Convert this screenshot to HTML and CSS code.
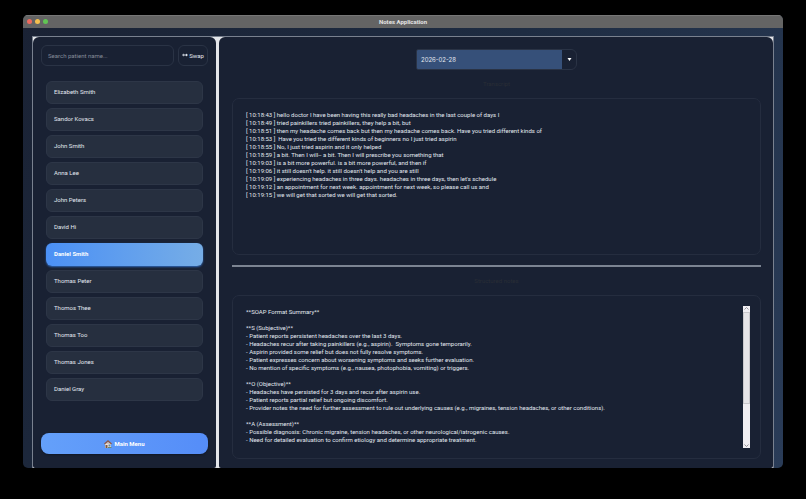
FILE: index.html
```html
<!DOCTYPE html>
<html lang="en">
<head>
    <meta charset="UTF-8">
    <meta name="viewport" content="width=device-width, initial-scale=1.0">
    <title>Notes Application</title>
    <link rel="stylesheet" href="styles.css">
</head>
<body>
    <div class="window">
        <header class="titlebar">
            <div class="lights">
                <span class="light close"></span>
                <span class="light minimize"></span>
                <span class="light zoom"></span>
            </div>
            <h1>Notes Application</h1>
        </header>

        <div class="splitter">
            <aside class="panel sidebar">
                <div class="search-row">
                    <input class="search" type="text" placeholder="Search patient name..." aria-label="Search patient name">
                    <button class="swap" type="button">
                        <svg width="6" height="4" viewBox="0 0 15 10" aria-hidden="true">
                            <path d="M5 1 L0 5 L5 9 Z M10 1 L15 5 L10 9 Z M4 4 H11 V6 H4 Z" fill="#e2e8f0"/>
                        </svg>
                        Swap
                    </button>
                </div>

                <div class="patients">
                    <button class="patient" type="button">Elizabeth Smith</button>
                    <button class="patient" type="button">Sandor Kovacs</button>
                    <button class="patient" type="button">John Smith</button>
                    <button class="patient" type="button">Anna Lee</button>
                    <button class="patient" type="button">John Peters</button>
                    <button class="patient" type="button">David Hi</button>
                    <button class="patient selected" type="button">Daniel Smith</button>
                    <button class="patient" type="button">Thomas Peter</button>
                    <button class="patient" type="button">Thomos Thee</button>
                    <button class="patient" type="button">Thomas Too</button>
                    <button class="patient" type="button">Thomas Jones</button>
                    <button class="patient" type="button">Daniel Gray</button>
                </div>

                <button class="main-menu" type="button">
                    <svg width="8" height="8" viewBox="0 0 16 16" aria-hidden="true">
                        <rect x="2" y="7" width="12" height="9" fill="#ece3d8"/>
                        <path d="M8 0 L16 7 L14 9 L8 4 L2 9 L0 7 Z" fill="#8d5a4c"/>
                        <path d="M8 4 L13 8 H3 Z" fill="#d8c4b4"/>
                        <rect x="3" y="10" width="4" height="6" fill="#7a5a48"/>
                        <rect x="9" y="9" width="4" height="4" fill="#5f88a8"/>
                        <rect x="8" y="14" width="7" height="2" fill="#6b8a6a"/>
                    </svg>
                    Main Menu
                </button>
            </aside>

            <main class="panel content">
                <div class="date-picker">
                    <select class="date" aria-label="Session date">
                        <option>2026-02-28</option>
                    </select>
                    <svg class="arrow" width="5" height="3" viewBox="0 0 10 6" aria-hidden="true">
                        <path d="M1 0 H9 L5 6 Z" fill="#ffffff"/>
                    </svg>
                </div>

                <section class="pane transcript">
                    <label for="transcript">Transcript</label>
                    <div class="box">
                        <textarea id="transcript" readonly>[ 10:18:43 ] hello doctor I have been having this really bad headaches in the last couple of days I
[ 10:18:49 ] tried painkillers tried painkillers, they help a bit, but
[ 10:18:51 ] then my headache comes back but then my headache comes back. Have you tried different kinds of
[ 10:18:53 ]  Have you tried the different kinds of beginners no I just tried aspirin
[ 10:18:55 ] No, I just tried aspirin and it only helped
[ 10:18:59 ] a bit. Then I will-- a bit. Then I will prescribe you something that
[ 10:19:03 ] is a bit more powerful. is a bit more powerful, and then if
[ 10:19:06 ] it still doesn't help. it still doesn't help and you are still
[ 10:19:09 ] experiencing headaches in three days. headaches in three days, then let's schedule
[ 10:19:12 ] an appointment for next week. appointment for next week, so please call us and
[ 10:19:15 ] we will get that sorted we will get that sorted.</textarea>
                    </div>
                </section>

                <section class="pane notes">
                    <label for="notes">Structured notes</label>
                    <div class="box">
                        <textarea id="notes" readonly>**SOAP Format Summary**

**S (Subjective)**
- Patient reports persistent headaches over the last 3 days.
- Headaches recur after taking painkillers (e.g., aspirin).  Symptoms gone temporarily.
- Aspirin provided some relief but does not fully resolve symptoms.
- Patient expresses concern about worsening symptoms and seeks further evaluation.
- No mention of specific symptoms (e.g., nausea, photophobia, vomiting) or triggers.

**O (Objective)**
- Headaches have persisted for 3 days and recur after aspirin use.
- Patient reports partial relief but ongoing discomfort.
- Provider notes the need for further assessment to rule out underlying causes (e.g., migraines, tension headaches, or other conditions).

**A (Assessment)**
- Possible diagnosis: Chronic migraine, tension headaches, or other neurological/iatrogenic causes.
- Need for detailed evaluation to confirm etiology and determine appropriate treatment.</textarea>
                        <div class="scrollbar">
                            <svg width="5" height="5" viewBox="0 0 10 10" aria-hidden="true">
                                <path d="M1 7 L5 3 L9 7" fill="none" stroke="#77777c" stroke-width="1.5"/>
                            </svg>
                            <div class="track"><div class="thumb"></div></div>
                            <svg width="5" height="5" viewBox="0 0 10 10" aria-hidden="true">
                                <path d="M1 3 L5 7 L9 3" fill="none" stroke="#77777c" stroke-width="1.5"/>
                            </svg>
                        </div>
                    </div>
                </section>
            </main>
        </div>
    </div>
</body>
</html>
```

FILE: styles.css
```css
* {
    box-sizing: border-box;
}
body {
    margin: 0;
    height: 100vh;
    padding: 15px 23px 31px;
    background-color: #000;
    font-family: Roboto, "Liberation Sans", sans-serif;
    font-size: 6px;
    color: #e2e8f0;
}
button, input, select, textarea {
    font: inherit;
    color: inherit;
    margin: 0;
}
.window {
    height: 100%;
    display: flex;
    flex-direction: column;
    border-radius: 5px;
    overflow: hidden;
    background: linear-gradient(120deg, #1a2234 0%, #1e2c42 50%, #2a3c58 100%);
}
.titlebar {
    display: grid;
    grid-template-columns: 1fr auto 1fr;
    align-items: center;
    height: 13px;
    padding: 0 4px 1px;
    background-color: #646464;
    border-top: 1px solid #777;
}
.titlebar h1 {
    margin: 0;
    font-size: 6px;
    font-weight: 700;
    color: #e4e4e4;
}
.lights {
    display: flex;
    gap: 3px;
}
.light {
    width: 5px;
    height: 5px;
    border-radius: 50%;
}
.close {
    background-color: #ed6a5e;
}
.minimize {
    background-color: #f4bf4f;
}
.zoom {
    background-color: #61c554;
}
.splitter {
    flex: 1;
    min-height: 0;
    display: grid;
    grid-template-columns: 183px 1fr;
    gap: 3px;
    margin: 8px 9px 0;
    border: 1px solid #79818f;
    border-bottom: none;
    background-color: #e4e6ea;
}
.panel {
    min-height: 0;
    display: flex;
    flex-direction: column;
    border-radius: 6px 6px 2px 2px;
    background-color: #192133;
}
.sidebar {
    padding: 8px 8px 14px;
}
.search-row {
    display: flex;
    gap: 4px;
    height: 21px;
}
.search, .swap {
    border: 1px solid #2a3345;
    border-radius: 6px;
    background-color: #192133;
}
.search {
    flex: 1;
    min-width: 0;
    padding: 0 6px 1px;
}
.search::placeholder {
    color: #858c99;
}
.swap {
    width: 30px;
    padding: 0 0 1px;
    display: flex;
    justify-content: center;
    align-items: center;
    gap: 1px;
}
.patients {
    flex: 1;
    display: flex;
    flex-direction: column;
    gap: 4px;
    padding: 15px 5px 0;
}
.patient {
    height: 23px;
    padding: 0 7px 2px;
    border: 1px solid #2d3647;
    border-radius: 6px;
    background-color: #262f3f;
    text-align: left;
}
.selected {
    border-color: transparent;
    background: linear-gradient(90deg, #4b90f5, #76ade6) border-box;
    box-shadow: 0 1px 2px #2f66b5;
    color: #fff;
    font-weight: 700;
}
.main-menu {
    height: 21px;
    border: none;
    border-radius: 8px;
    background: linear-gradient(90deg, #64a0fa, #558df8);
    box-shadow: 0 1px 2px #111827;
    color: #fff;
    font-weight: 700;
    display: flex;
    justify-content: center;
    align-items: center;
    gap: 2px;
}
.content {
    padding: 12px 12px 9px 13px;
}
.date-picker {
    position: relative;
    width: 161px;
    height: 21px;
    align-self: center;
}
.date {
    appearance: none;
    width: 100%;
    height: 100%;
    padding: 0 4px;
    border: 1px solid #2a3345;
    border-radius: 2px 6px 6px 2px;
    background: linear-gradient(90deg, #365079 145px, #192133 145px);
    font-family: Inter, "Liberation Sans", sans-serif;
}
.arrow {
    position: absolute;
    right: 5px;
    top: 9px;
}
.pane {
    min-height: 0;
    display: flex;
    flex-direction: column;
}
.pane label {
    align-self: center;
    line-height: 8px;
    color: #292e36;
}
.transcript {
    flex: 25;
    padding: 10px 0;
    border-bottom: 2px solid #7c8492;
}
.notes {
    flex: 26;
    padding-top: 10px;
}
.box {
    flex: 1;
    min-height: 0;
    display: flex;
    margin-top: 10px;
    padding: 10px;
    border: 1px solid #252d3f;
    border-radius: 7px;
}
.box textarea {
    flex: 1;
    min-width: 0;
    padding: 2px 3px;
    border: none;
    outline: none;
    resize: none;
    overflow: hidden;
    background: none;
    line-height: 8px;
}
.scrollbar {
    width: 7px;
    display: flex;
    flex-direction: column;
    align-items: center;
    gap: 1px;
    background-color: #f0eef2;
}
.track {
    flex: 1;
    align-self: stretch;
}
.thumb {
    height: 71%;
    border: 1px solid #c9c8cc;
    background-color: #e6e5e8;
}
```
